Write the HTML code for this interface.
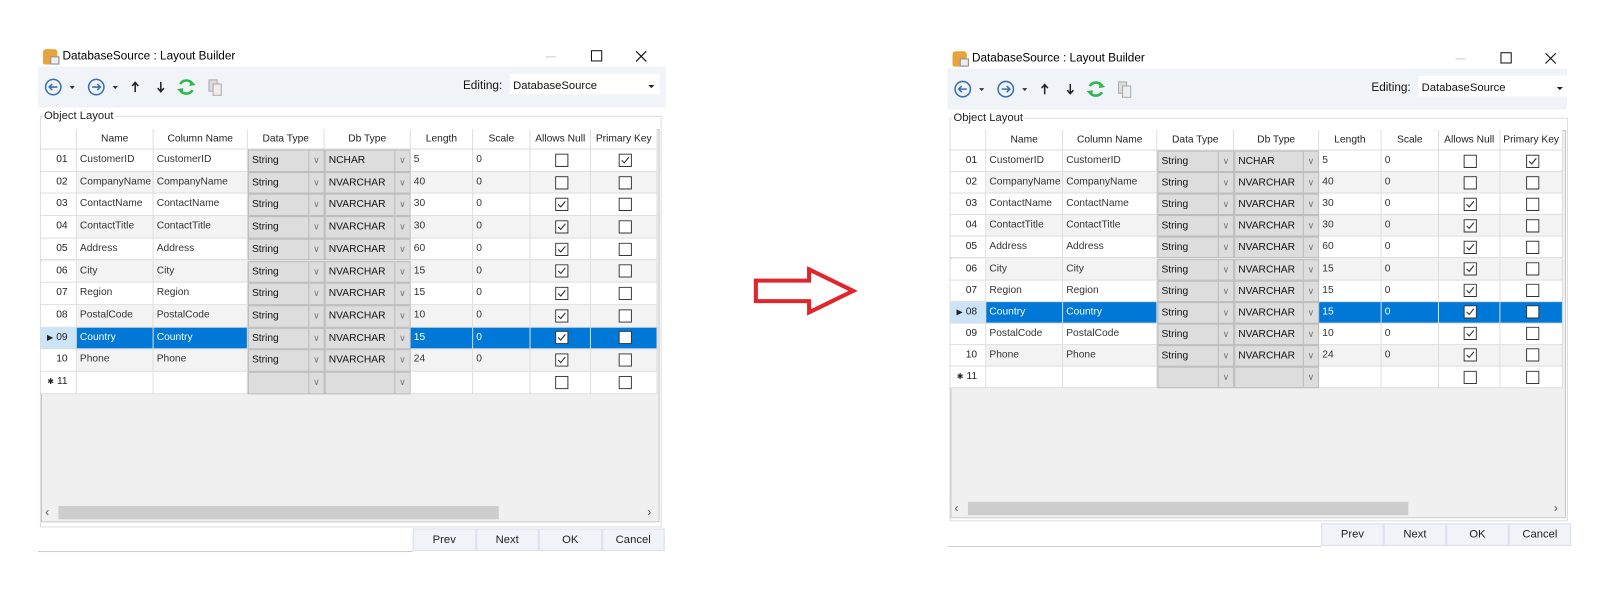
<!DOCTYPE html>
<html><head><meta charset="utf-8"><style>
body{margin:0;width:1606px;height:593px;background:#fff;position:relative;overflow:hidden;font-family:"Liberation Sans",sans-serif;}
#wrap{position:absolute;left:0;top:0;width:1568px;height:580px;transform:scale(1.0242);transform-origin:0 0;}
.a{position:absolute;box-sizing:border-box;}
.t{font-size:10px;color:#333;white-space:nowrap;}
</style></head><body>
<div id="wrap">
<svg class="a" style="left:735px;top:258px" width="125" height="52"><polygon points="3,16 55,16 55,5 98,26 55,47 55,36 3,36" fill="none" stroke="#e0252b" stroke-width="4"/></svg>
<div id="root"></div>
</div>
<script>
var rows=[
["01","CustomerID","String","NCHAR","5",0,1],
["02","CompanyName","String","NVARCHAR","40",0,0],
["03","ContactName","String","NVARCHAR","30",1,0],
["04","ContactTitle","String","NVARCHAR","30",1,0],
["05","Address","String","NVARCHAR","60",1,0],
["06","City","String","NVARCHAR","15",1,0],
["07","Region","String","NVARCHAR","15",1,0],
["08","PostalCode","String","NVARCHAR","10",1,0],
["09","Country","String","NVARCHAR","15",1,0],
["10","Phone","String","NVARCHAR","24",1,0]];
var rows2=rows.slice(0,7).concat([["08","Country","String","NVARCHAR","15",1,0],["09","PostalCode","String","NVARCHAR","10",1,0],rows[9]]);
function cb(x,y,checked){
 return '<svg class="a" style="left:'+x+'px;top:'+y+'px" width="13" height="13"><rect x="0.5" y="0.5" width="12" height="12" fill="#fff" stroke="#333"/>'+(checked?'<path d="M3 6.5 L5.5 9 L10 3.5" fill="none" stroke="#333" stroke-width="1.1"/>':'')+'</svg>';
}
function win(o){
 var h='';var X=o.x,Y=o.y;
 h+='<div class="a" style="left:'+(X+5)+'px;top:'+(Y)+'px;width:14px;height:15px;background:#e8a33a;border-radius:3px 3px 2px 2px"></div>';
 h+='<div class="a" style="left:'+(X+12)+'px;top:'+(Y+7)+'px;width:9px;height:8px;background:#eee;border:1px solid #888"></div>';
 h+='<div class="a t" style="left:'+(X+24)+'px;top:'+(Y+1)+'px;font-size:11.5px;color:#000">DatabaseSource : Layout Builder</div>';
 h+='<div class="a" style="left:'+(X+496)+'px;top:'+(Y+7)+'px;width:10px;height:1px;background:#ccc"></div>';
 h+='<div class="a" style="left:'+(X+540)+'px;top:'+(Y+1)+'px;width:11px;height:11px;border:1px solid #111"></div>';
 h+='<svg class="a" style="left:'+(X+583)+'px;top:'+(Y+1)+'px" width="12" height="12"><path d="M1 1L11 11M11 1L1 11" stroke="#111" stroke-width="1.1"/></svg>';
 h+='<div class="a" style="left:'+(X)+'px;top:'+(Y+17)+'px;width:'+o.tw+'px;height:40px;background:#f0f4f9"></div>';
 var ty=Y+28;
 h+='<svg class="a" style="left:'+(X+6)+'px;top:'+ty+'px" width="180" height="20"><g fill="none" stroke="#3a6fb0" stroke-width="1.5"><circle cx="9" cy="9" r="7.5"/><path d="M13 9H5M8 6L5 9L8 12"/><circle cx="51" cy="9" r="7.5"/><path d="M47 9H55M52 6L55 9L52 12"/></g><path d="M25 8h5l-2.5 3z M67 8h5l-2.5 3z" fill="#333"/><path d="M89 14V5M86 8L89 4.5L92 8 M114 4V13M111 10L114 13.5L117 10" fill="none" stroke="#222" stroke-width="1.5"/><g fill="none" stroke="#2db84a" stroke-width="2.5"><path d="M133 6A7 7 0 0 1 145 6"/><path d="M145 12A7 7 0 0 1 133 12"/></g><path d="M143 2L148 7L142 8Z M135 16L130 11L136 10Z" fill="#2db84a"/><rect x="161" y="2" width="8" height="11" fill="#ddd" stroke="#aaa"/><rect x="165" y="6" width="8" height="11" fill="#eee" stroke="#aaa"/></svg>';
 h+='<div class="a t" style="left:'+(X+o.ex)+'px;top:'+(Y+30)+'px;font-size:11.5px;color:#111">Editing:</div>';
 h+='<div class="a" style="left:'+(X+o.ex+46)+'px;top:'+(Y+24)+'px;width:146px;height:20px;background:#fff"></div>';
 h+='<div class="a t" style="left:'+(X+o.ex+49)+'px;top:'+(Y+30)+'px;font-size:11px;color:#111">DatabaseSource</div>';
 h+='<div class="a" style="left:'+(X+o.ex+181)+'px;top:'+(Y+35)+'px;width:0;height:0;border-left:3px solid transparent;border-right:3px solid transparent;border-top:3px solid #222"></div>';
 var gx=X+2,gy=Y+65;
 h+='<div class="a" style="left:'+gx+'px;top:'+gy+'px;width:'+(o.gw)+'px;height:'+(o.gh)+'px;border:1px solid #ddd"></div>';
 h+='<div class="a t" style="left:'+(gx+3)+'px;top:'+(gy-6)+'px;font-size:11px;background:#fff;color:#222;padding:0 1px">Object Layout</div>';
 var cx=o.cols, gl=cx[0];
 var top=o.hy, rh=o.rh;
 h+='<div class="a" style="left:'+gl+'px;top:'+top+'px;width:'+(o.gr-gl)+'px;height:'+(o.gb-top)+'px;background:#f0f0f0;border:1px solid #c8c8c8"></div>';
 var hd=["","Name","Column Name","Data Type","Db Type","Length","Scale","Allows Null","Primary Key"];
 var hh=o.hh;
 for(var i=0;i<hd.length;i++){
  var w=cx[i+1]-cx[i];
  h+='<div class="a t" style="left:'+cx[i]+'px;top:'+top+'px;width:'+w+'px;height:'+hh+'px;background:#fff;border-right:1px solid #ddd;border-bottom:1px solid #ddd;text-align:center;line-height:'+hh+'px;color:#222">'+hd[i]+'</div>';
 }
 var R=o.rows.concat([["11","","","","",0,0]]);
 for(var r=0;r<R.length;r++){
  var d=R[r],y=top+hh+r*rh,sel=(r==o.sel),nw=(r==10);
  var bg=sel?'#0078d7':(r%2?'#f3f3f3':'#fff'), fg=sel?'#fff':'#333';
  var vals=[d[0],d[1],d[1],d[2],d[3],d[4],nw?'':'0'];
  for(var c=0;c<9;c++){
   var x=cx[c],w=cx[c+1]-cx[c],st='left:'+x+'px;top:'+y+'px;width:'+w+'px;height:'+rh+'px;border-right:1px solid #ddd;border-bottom:1px solid #ddd;line-height:'+(rh-1)+'px;';
   if(c==0){
    h+='<div class="a t" style="'+st+'background:'+(sel?'#cce4f7':'#fff')+';text-align:right;padding-right:8px;color:#222">'+(sel?'<span style="font-size:8px">&#9654;</span> ':'')+(nw?'<span style="font-size:8px">&#10033;</span> ':'')+vals[0]+'</div>';
   } else if(c==3||c==4){
    h+='<div class="a t" style="'+st+'background:#ddd;border:1px solid #bbb;padding-left:3px;color:#111">'+vals[c]+'<div class="a" style="right:0;top:0;width:15px;height:'+(rh-2)+'px;border-left:1px solid #bbb;text-align:center;font-size:9px;color:#777;line-height:'+(rh-2)+'px">&#8744;</div></div>';
   } else if(c>=7){
    h+='<div class="a" style="'+st+'background:'+bg+'"></div>';
    h+=cb(x+Math.round(w/2)-6,Math.round(y+rh/2)-7,c==7?d[5]:d[6]);
   } else {
    h+='<div class="a t" style="'+st+'background:'+bg+';color:'+fg+';padding-left:3px">'+vals[c]+'</div>';
   }
  }
 }
 var sy=o.gb-18;
 h+='<div class="a" style="left:'+(gl+1)+'px;top:'+sy+'px;width:'+(o.gr-gl-2)+'px;height:17px;background:#f0f0f0"></div>';
 h+='<div class="a" style="left:'+(gl+17)+'px;top:'+(sy+2)+'px;width:'+o.thumb+'px;height:13px;background:#cdcdcd"></div>';
 h+='<div class="a t" style="left:'+(gl+4)+'px;top:'+(sy+1)+'px;font-size:12px;color:#555">&lsaquo;</div>';
 h+='<div class="a t" style="left:'+(o.gr-12)+'px;top:'+(sy+1)+'px;font-size:12px;color:#555">&rsaquo;</div>';
 var bn=["Prev","Next","OK","Cancel"];
 for(var b=0;b<4;b++){
  h+='<div class="a t" style="left:'+(o.bx+b*o.bw)+'px;top:'+o.by+'px;width:'+o.bw+'px;height:22px;background:#f0f4f9;border:1px solid #dde;text-align:center;line-height:21px;font-size:11px;color:#222">'+bn[b]+'</div>';
 }
 h+='<div class="a" style="left:'+(X)+'px;top:'+(o.by+22)+'px;width:'+(o.bx-X)+'px;height:1px;background:#ccc"></div>';
 return h;
}
var H='';
H+=win({x:37,y:48,tw:613,ex:415,gw:607,gh:402,cols:[40,75,150,242,317,401,462,518,577,642],gr:644,gb:510,hy:126,hh:20,rh:21.7,rows:rows,sel:8,thumb:430,bx:403,bw:61.5,by:516});
H+=win({x:925,y:50,tw:605,ex:414,gw:604,gh:394,cols:[928,963,1038,1130,1205,1288,1349,1405,1465,1526],gr:1529,gb:506,hy:127,hh:20,rh:21.1,rows:rows2,sel:7,thumb:430,bx:1290,bw:61,by:511});
document.getElementById('root').innerHTML=H;
</script>
</body></html>
